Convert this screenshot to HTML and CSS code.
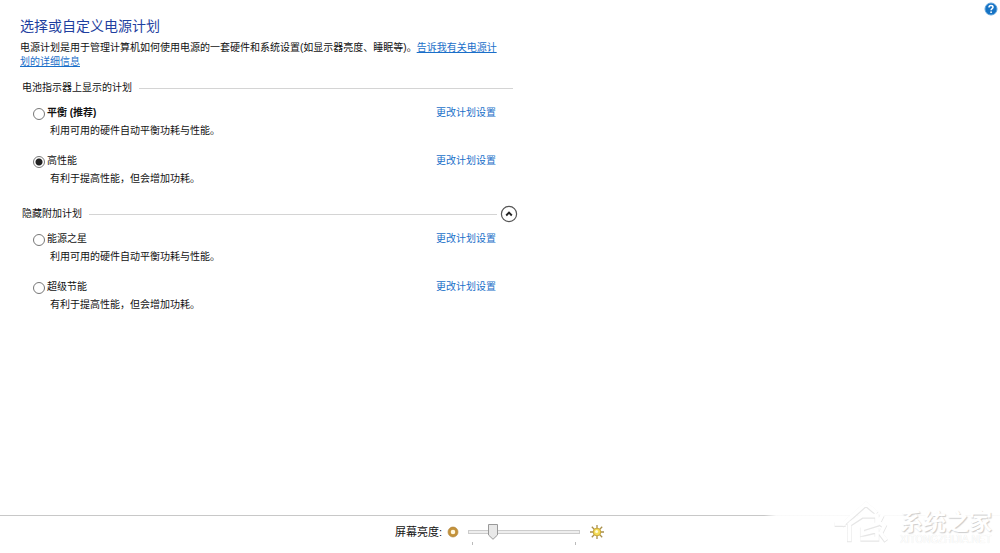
FILE: index.html
```html
<!DOCTYPE html>
<html lang="zh-CN">
<head>
    <meta charset="UTF-8">
    <meta name="viewport" content="width=device-width, initial-scale=1.0">
    <title>电源选项</title>
    <link rel="stylesheet" href="styles.css">
</head>
<body>

<main>
    <form class="content">
        <h1>选择或自定义电源计划</h1>
        <p class="intro">电源计划是用于管理计算机如何使用电源的一套硬件和系统设置(如显示器亮度、睡眠等)。<a href="#">告诉我有关电源计划的详细信息</a></p>

        <!-- Plans shown on the battery meter -->
        <section>
            <div class="group-header short">
                <h2>电池指示器上显示的计划</h2>
                <span class="rule"></span>
            </div>
            <div class="plan">
                <input type="radio" name="plan" id="balanced">
                <label for="balanced"><strong>平衡 (推荐)</strong></label>
                <a href="#">更改计划设置</a>
                <p>利用可用的硬件自动平衡功耗与性能。</p>
            </div>
            <div class="plan">
                <input type="radio" name="plan" id="high" checked>
                <label for="high">高性能</label>
                <a href="#">更改计划设置</a>
                <p>有利于提高性能，但会增加功耗。</p>
            </div>
        </section>

        <!-- Additional plans -->
        <section>
            <div class="group-header">
                <h2>隐藏附加计划</h2>
                <span class="rule"></span>
                <button type="button" class="collapse-btn" aria-label="隐藏附加计划">
                    <svg width="18" height="18" viewBox="0 0 18 18">
                        <circle cx="9" cy="9" r="7.6" fill="#fff" stroke="#555" stroke-width="1.2"/>
                        <path d="M6.2 10.5 9 7.7l2.8 2.8" fill="none" stroke="#222" stroke-width="1.9"/>
                    </svg>
                </button>
            </div>
            <div class="plan">
                <input type="radio" name="plan" id="star">
                <label for="star">能源之星</label>
                <a href="#">更改计划设置</a>
                <p>利用可用的硬件自动平衡功耗与性能。</p>
            </div>
            <div class="plan">
                <input type="radio" name="plan" id="saver">
                <label for="saver">超级节能</label>
                <a href="#">更改计划设置</a>
                <p>有利于提高性能，但会增加功耗。</p>
            </div>
        </section>
    </form>

    <button type="button" class="help-btn" aria-label="帮助">
        <svg width="14" height="14" viewBox="0 0 14 14">
            <circle cx="7" cy="7" r="6" fill="#1673c4" stroke="#5ea3dc" stroke-width="1"/>
            <path d="M5 5.4C5 4.2 5.9 3.6 7 3.6s2 .6 2 1.7C9 6.6 7.1 6.6 7.1 8.2" fill="none" stroke="#fff" stroke-width="1.5"/>
            <circle cx="7.1" cy="10.2" r=".9" fill="#fff"/>
        </svg>
    </button>
</main>

<footer>
    <label for="brightness">屏幕亮度:</label>
    <svg class="dim" width="12" height="12" viewBox="0 0 12 12">
        <circle cx="6" cy="6" r="3.6" fill="#fff6dc" stroke="#c4923a" stroke-width="2.6"/>
        <circle cx="6" cy="6" r="5" fill="none" stroke="#a87a30" stroke-width=".6"/>
    </svg>
    <div class="slider">
        <input type="range" id="brightness" min="0" max="100" value="20">
        <div class="ticks"><span></span><span></span></div>
    </div>
    <svg width="16" height="16" viewBox="0 0 16 16">
        <path d="M8 1v3M8 12v3M1 8h3M12 8h3M2.8 2.8l2.4 2.4M10.8 10.8l2.4 2.4M2.8 13.2l2.4-2.4M10.8 5.2l2.4-2.4" stroke="#a88f4c" stroke-width="1.3"/>
        <circle cx="8" cy="8" r="3.8" fill="#f4dc58" stroke="#c9a531" stroke-width="1"/>
        <circle cx="7.6" cy="7.6" r="1.5" fill="#fffbd8"/>
    </svg>
</footer>

<!-- Site watermark over the bottom corner -->
<div class="watermark">
    <svg width="62" height="46" viewBox="0 0 66 50">
        <path d="M0 28h12M8 29 34 6l12 10M16 27v20M16 28l14-9h16v9l-16 5v6l16-4v9H28M52 18l-4 8 6 4-4 8 6 8" fill="none" stroke="#e6e6e6" stroke-width="5"/>
        <path d="M0 27h12M8 28 34 5l12 10M16 26v20M16 27l14-9h16v9l-16 5v6l16-4v9H28M52 17l-4 8 6 4-4 8 6 8" fill="none" stroke="#fff" stroke-width="4"/>
    </svg>
    <div class="watermark-text">
        <span class="name">系统之家</span>
        <span class="site">XITONGZHIJIA.NET</span>
    </div>
</div>

</body>
</html>
```

FILE: styles.css
```css
body {
    font-family: "Liberation Sans", "Noto Sans CJK SC", sans-serif;
    font-size: 10px;
    line-height: 14px;
    margin: 0;
    min-height: 100vh;
    display: flex;
    flex-direction: column;
    position: relative;
    background-color: #fff;
    color: #111;
}

h1, h2, p {
    margin: 0;
    font-weight: normal;
}

a {
    color: #1a6fc9;
}

button {
    display: flex;
    padding: 0;
    border: none;
    background: none;
    cursor: pointer;
}

main {
    flex: 1;
    display: flex;
    justify-content: space-between;
    align-items: flex-start;
    padding: 2px 2px 0 20px;
}

.content {
    flex: 0 1 498px;
    padding-top: 12px;
}

h1 {
    font-size: 14px;
    line-height: 24px;
    color: #1f3f9f;
}

.intro {
    margin: 3px 0 10px;
    padding-right: 18px;
}

.group-header {
    display: flex;
    align-items: center;
    gap: 7px;
    height: 18px;
    margin-bottom: 7px;
    padding-left: 2px;
}

.group-header.short {
    padding-right: 5px;
}

h2 {
    font-size: 10px;
}

.rule {
    flex: 1;
    height: 1px;
    background-color: #d4d4d4;
}

.collapse-btn {
    margin-left: -4px;
}

section + section {
    margin-top: 17px;
}

.plan {
    display: grid;
    grid-template-columns: 12px 1fr 82px;
    column-gap: 2px;
    align-items: center;
    line-height: 18px;
    margin-bottom: 12px;
    padding-left: 13px;
}

.plan a {
    text-decoration: none;
}

.plan p {
    grid-column: 2 / 4;
    padding-left: 3px;
}

.plan input {
    appearance: none;
    box-sizing: border-box;
    width: 12px;
    height: 12px;
    margin: 2px 0 0;
    border: 1px solid #777;
    border-radius: 50%;
    background-color: #fff;
}

.plan input:checked {
    background-image: radial-gradient(circle, #222 0 3px, transparent 4px);
}

footer {
    display: flex;
    justify-content: center;
    align-items: center;
    gap: 9px;
    height: 32px;
    padding-bottom: 5px;
    border-top: 1px solid #c8c8c8;
    font-size: 11px;
}

.dim {
    margin-left: -4px;
}

.slider {
    width: 112px;
    padding-top: 5px;
}

.slider input {
    appearance: none;
    display: block;
    width: 100%;
    height: 16px;
    margin: 0;
    background: linear-gradient(#ccc, #ccc) center / 100% 4px no-repeat;
}

.slider input::-webkit-slider-runnable-track {
    height: 16px;
    background: linear-gradient(#eee, #eee) center / 110px 2px no-repeat;
}

.slider input::-webkit-slider-thumb {
    appearance: none;
    width: 10px;
    height: 16px;
    background: url("data:image/svg+xml,%3Csvg xmlns='http://www.w3.org/2000/svg' width='10' height='16'%3E%3Cpath d='M.5.5h9v10.500L5 15.300.5 11z' fill='%23e8e8e8' stroke='%23999'/%3E%3C/svg%3E") no-repeat;
}

.ticks {
    display: flex;
    justify-content: space-between;
    padding: 2px 4px 0;
}

.ticks span {
    width: 1px;
    height: 3px;
    background-color: #bbb;
}

/* the white wash fades out the footer line behind the logo */
.watermark {
    position: absolute;
    right: 0;
    bottom: 0;
    display: flex;
    align-items: flex-end;
    gap: 4px;
    padding: 0 8px 8px 70px;
    background: linear-gradient(to right, transparent, rgba(255, 255, 255, 0.9) 12px);
    pointer-events: none;
}

.watermark-text {
    display: flex;
    flex-direction: column;
    color: #fff;
    text-shadow: 1px 1px 1px #ccc;
}

.name {
    font-size: 23px;
    line-height: 26px;
    font-weight: bold;
}

.site {
    font-size: 10px;
    line-height: 10px;
    text-shadow: 0 0 1px #ddd;
}
```
